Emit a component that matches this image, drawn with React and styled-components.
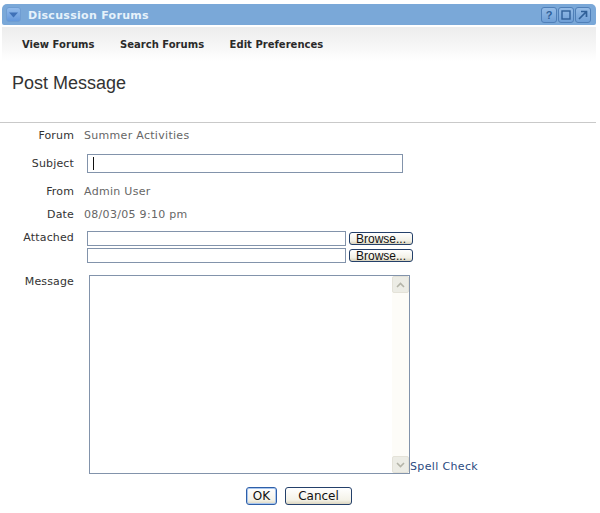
import React from "react";
import styled, { createGlobalStyle } from "styled-components";

const Global = createGlobalStyle`
  html, body { margin: 0; padding: 0; background: #fff; }
  body { font-family: "DejaVu Sans", Verdana, sans-serif; width: 600px; height: 513px; overflow: hidden; }
`;
const Page = styled.div`
  width: 600px; height: 513px; padding-top: 4px; box-sizing: border-box; display: flex; flex-direction: column;
`;
const TitleBar = styled.div`
  width: 594px; height: 21px; margin-left: 2px; background: #7aa8d8; border-radius: 5px 5px 2px 2px;
  display: flex; align-items: center; padding: 0 5px 0 4px; box-sizing: border-box;
`;
const MenuIcon = styled.div`
  width: 15px; height: 15px; border-radius: 3px; border: 1px solid #6f9dd2; box-sizing: border-box;
  background: linear-gradient(#93bbea, #6498dc); display: flex; align-items: center; justify-content: center;
`;
const Title = styled.div`
  margin-left: 7px; padding-top: 1px; color: #e6f2fb; font: bold 11px "DejaVu Sans", sans-serif; letter-spacing: 0.3px; flex: 1;
`;
const WinButtons = styled.div`display: flex; gap: 1px;`;
const WinButton = styled.div`
  width: 16px; height: 16px; box-sizing: border-box; border: 1px solid #4f7fb8; border-radius: 3px;
  background: linear-gradient(#94bbe6, #6f9fd6); color: #2f5f98; display: flex; align-items: center; justify-content: center;
  font: bold 11px "Liberation Sans", sans-serif;
`;
const Toolbar = styled.div`
  width: 594px; height: 34px; margin: 2px 0 0 2px; background: linear-gradient(#ededed, #f4f4f4 45%, #ffffff);
  display: flex; gap: 25.5px; padding: 11px 0 0 20px; box-sizing: border-box;
`;
const NavItem = styled.div`
  font: bold 10px "DejaVu Sans", sans-serif; color: #2a2a2a; line-height: 14px; letter-spacing: 0.02px;
`;
const Heading = styled.h1`
  margin: 12px 0 0 12px; height: 20px; font: normal 18px/20px "Liberation Sans", Arial, sans-serif; color: #333;
`;
const Divider = styled.hr`
  width: 596px; margin: 29px 0 0 0; height: 1px; border: 0; background: #c9c9c9;
`;
const Row = styled.div`
  display: flex; align-items: ${p => p.$align || "center"}; margin-top: ${p => p.$top}px; height: ${p => p.$h}px;
`;
const Label = styled.div`
  width: 74px; text-align: right; font: 11px/14px "DejaVu Sans", sans-serif; color: #333; flex: none; letter-spacing: 0.15px;
  padding-top: ${p => p.$nudge || 0}px;
`;
const Value = styled.div`
  margin-left: 10px; font: 11px/14px "DejaVu Sans", sans-serif; color: #666; letter-spacing: 0.3px;
`;
const Field = styled.div`
  margin-left: 13px; width: ${p => p.$w}px; height: ${p => p.$h}px; box-sizing: border-box;
  border: 1px solid #8293ab; background: #fff; flex: none; display: flex; align-items: center; padding-left: 5px;
`;
const Caret = styled.div`width: 1px; height: 13px; background: #111;`;
const FileStack = styled.div`display: flex; flex-direction: column; gap: 2px; margin-left: 13px;`;
const FileRow = styled.div`display: flex; align-items: center; gap: 3px;`;
const FileField = styled.div`
  width: 259px; height: 15px; box-sizing: border-box; border: 1px solid #8293ab; background: #fff;
`;
const Browse = styled.div`
  width: 64px; height: 13px; box-sizing: border-box; border: 1px solid #24406a; border-radius: 3px;
  background: linear-gradient(#fff, #f2f0e6 70%, #d8d2bc); display: flex; align-items: center; justify-content: center;
  font: 12px/11px "Liberation Sans", sans-serif; color: #111; padding-top: 1px;
`;
const MessageBox = styled.div`
  margin-left: 15px; width: 321px; height: 199px; box-sizing: border-box; border: 1px solid #8293ab; background: #fff;
  display: flex; justify-content: flex-end; flex: none;
`;
const Scrollbar = styled.div`
  width: 17px; background: #fdfcf8; display: flex; flex-direction: column; justify-content: space-between;
`;
const ScrollButton = styled.div`
  width: 17px; height: 17px; box-sizing: border-box; border: 1px solid #e4e2d8; border-radius: 2px; background: #ecece5;
  display: flex; align-items: center; justify-content: center;
`;
const SpellLink = styled.a`
  align-self: flex-end; font: 11px/14px "DejaVu Sans", sans-serif; color: #2b4a80; margin-bottom: 0; letter-spacing: 0.35px;
`;
const Actions = styled.div`
  display: flex; gap: 8px; margin: 13px 0 0 246px;
`;
const Action = styled.div`
  width: ${p => p.$w}px; height: 18px; box-sizing: border-box; border-radius: 3px;
  border: 1px solid ${p => (p.$primary ? "#2e5fa8" : "#24406a")};
  box-shadow: ${p => (p.$primary ? "inset 0 0 0 1px #a9c6ee" : "none")};
  background: linear-gradient(#fff, #f4f2e8 75%, #dcd6c0); display: flex; align-items: center; justify-content: center;
  font: 12px/14px "DejaVu Sans", sans-serif; color: #111;
`;

const Chevron = ({ up }) => (
  <svg width="9" height="6" viewBox="0 0 9 6">
    <path d={up ? "M1 5L4.5 1.5L8 5" : "M1 1L4.5 4.5L8 1"} fill="none" stroke="#b4b4a8" strokeWidth="1.6" />
  </svg>
);

export default function App() {
  return (
    <Page>
      <Global />
      <TitleBar>
        <MenuIcon>
          <svg width="9" height="6" viewBox="0 0 9 6"><path d="M0 0.5H9L4.5 5.5Z" fill="#3f71b8" /></svg>
        </MenuIcon>
        <Title>Discussion Forums</Title>
        <WinButtons>
          <WinButton>?</WinButton>
          <WinButton>
            <svg width="10" height="10" viewBox="0 0 10 10"><rect x="1" y="1" width="8" height="8" fill="none" stroke="#2f5f98" strokeWidth="1.4" /></svg>
          </WinButton>
          <WinButton>
            <svg width="10" height="10" viewBox="0 0 10 10"><path d="M1 9L8 2M3 1.5H8.5V7" fill="none" stroke="#2f5f98" strokeWidth="1.7" /></svg>
          </WinButton>
        </WinButtons>
      </TitleBar>
      <Toolbar>
        <NavItem>View Forums</NavItem>
        <NavItem>Search Forums</NavItem>
        <NavItem>Edit Preferences</NavItem>
      </Toolbar>
      <Heading>Post Message</Heading>
      <Divider />
      <Row $top={6} $h={14}><Label>Forum</Label><Value>Summer Activities</Value></Row>
      <Row $top={11} $h={19}><Label $nudge={1}>Subject</Label><Field $w={316} $h={19}><Caret /></Field></Row>
      <Row $top={12} $h={14}><Label>From</Label><Value>Admin User</Value></Row>
      <Row $top={9} $h={14}><Label>Date</Label><Value>08/03/05 9:10 pm</Value></Row>
      <Row $top={9} $h={32} $align="flex-start">
        <Label>Attached</Label>
        <FileStack>
          <FileRow><FileField /><Browse>Browse...</Browse></FileRow>
          <FileRow><FileField /><Browse>Browse...</Browse></FileRow>
        </FileStack>
      </Row>
      <Row $top={12} $h={199} $align="flex-start">
        <Label>Message</Label>
        <MessageBox>
          <Scrollbar>
            <ScrollButton><Chevron up /></ScrollButton>
            <ScrollButton><Chevron /></ScrollButton>
          </Scrollbar>
        </MessageBox>
        <SpellLink>Spell Check</SpellLink>
      </Row>
      <Actions>
        <Action $w={31} $primary>OK</Action>
        <Action $w={67}>Cancel</Action>
      </Actions>
    </Page>
  );
}
